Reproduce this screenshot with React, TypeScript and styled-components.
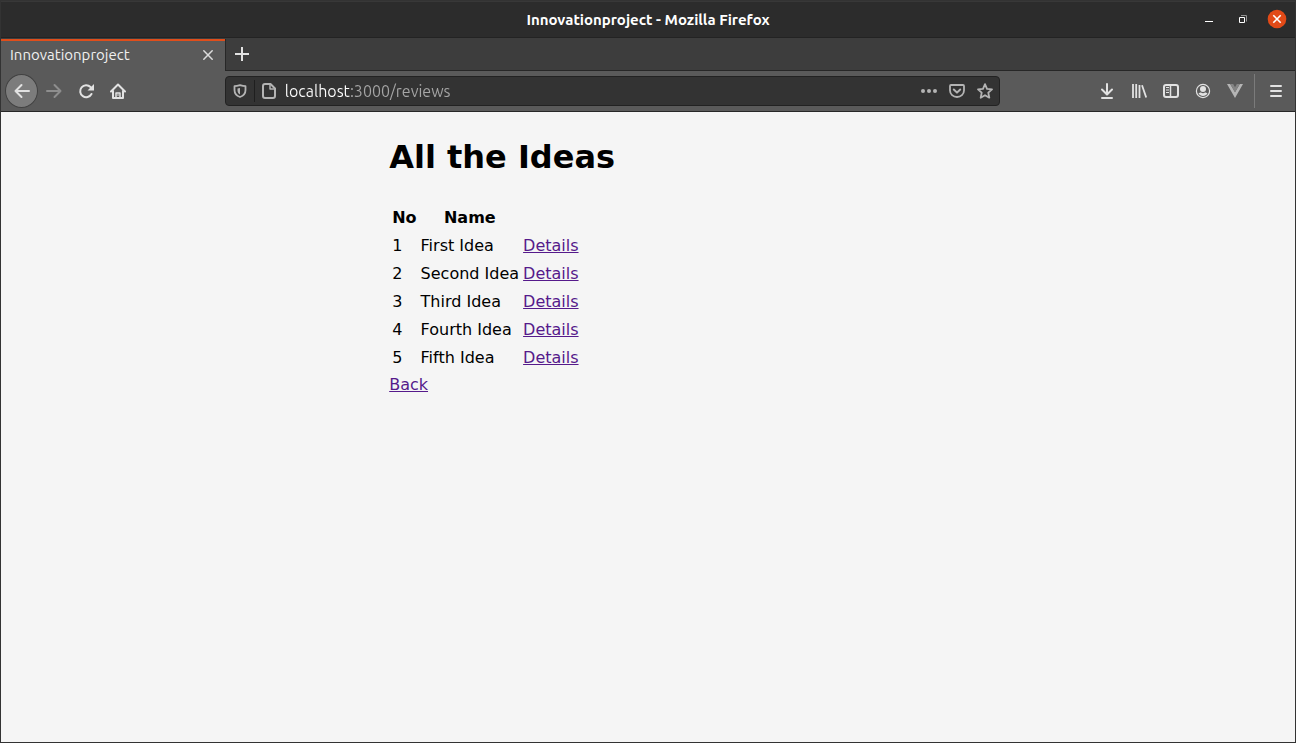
import React from "react";
import styled, { createGlobalStyle } from "styled-components";

const GlobalStyle = createGlobalStyle`
  *, *::before, *::after { box-sizing: border-box; }
  body { margin: 0; background: #f5f5f5; }
  button { padding: 0; border: 0; background: none; color: inherit; font: inherit; }
`;

const chromeFont = `"Ubuntu", "Noto Sans", "Open Sans", sans-serif`;

const Window = styled.div`
  display: flex;
  flex-direction: column;
  min-height: 100vh;
  border: 1px solid #333333;
  background: #f5f5f5;
`;

const TitleBar = styled.header`
  display: grid;
  grid-template-columns: 1fr auto 1fr;
  align-items: center;
  height: 37px;
  border-top: 1px solid #383838;
  border-bottom: 1px solid #232323;
  background: #2c2c2c;
  color: #ffffff;
  font: 700 15px/20px ${chromeFont};
`;

const WindowTitle = styled.span`
  grid-column: 2;
`;

const WindowButtons = styled.div`
  display: flex;
  justify-content: flex-end;
  align-items: center;
  padding: 0 1px 2px 0;
`;

const WindowButton = styled.button`
  display: grid;
  place-items: center;
  width: 34px;
  height: 32px;
`;

const TabStrip = styled.div`
  display: flex;
  height: 33px;
  padding-top: 1px;
  background: #3d3d3d;
  color: #f0f0f0;
`;

const Tab = styled.div`
  display: flex;
  align-items: center;
  justify-content: space-between;
  width: 224px;
  padding: 0 9px 2px;
  border-top: 2px solid #e04e1b;
  background: #5a5a5a;
  font: 400 15px/20px ${chromeFont};
`;

const TabClose = styled.button`
  display: grid;
  place-items: center;
  width: 16px;
  height: 16px;
`;

const TabRest = styled.div`
  display: flex;
  flex: 1;
  align-items: center;
  padding-bottom: 2px;
  border-left: 1px solid #272727;
  border-bottom: 1px solid #272727;
`;

const ToolBar = styled.nav`
  display: flex;
  align-items: center;
  height: 41px;
  padding: 0 3px 0 4px;
  border-bottom: 1px solid #272727;
  background: #5a5a5a;
  color: #e2e2e2;
`;

const ToolButton = styled.button<{ $dim?: boolean }>`
  display: grid;
  place-items: center;
  flex: none;
  width: 32px;
  height: 32px;
  color: ${(p) => (p.$dim ? "#8e8e8e" : "inherit")};
`;

const BackButton = styled(ToolButton)`
  width: 33px;
  height: 34px;
  border: 1px solid #414141;
  border-radius: 50%;
  background: #7c7c7c;
`;

const Spacer = styled.div`
  flex: 91 1 0;
`;

const AddressBar = styled.div`
  display: flex;
  flex: 775 1 0;
  align-items: center;
  height: 30px;
  border: 1px solid #222222;
  border-radius: 4px;
  background: #333333;
  color: #b4b4b4;
`;

const AddressButton = styled.button`
  display: grid;
  place-items: center;
  flex: none;
  width: 28px;
  height: 28px;
`;

const AddressDivider = styled.span`
  width: 1px;
  height: 22px;
  background: #1f1f1f;
`;

/* The host part is bright and the path part is muted. */
const AddressInput = styled.input`
  flex: 1;
  min-width: 0;
  height: 28px;
  margin-left: 2px;
  padding: 0;
  border: 0;
  outline: 0;
  background: linear-gradient(90deg, #ffffff 65px, #a6a6a6 65px);
  background-clip: text;
  -webkit-background-clip: text;
  color: transparent;
  font: 400 16px/20px ${chromeFont};
`;

const AddressActions = styled.div`
  display: flex;
`;

const ToolDivider = styled.span`
  width: 1px;
  height: 34px;
  margin: 0 5px 0 3px;
  background: #7b7b7b;
`;

const Page = styled.main`
  flex: 1;
  padding: 0 30%;
  color: #000000;
  font: 400 16px/24px "DejaVu Sans", sans-serif;
`;

const Heading = styled.h1`
  margin: 21px 0 22px;
  font-size: 32px;
  line-height: 48px;
`;

const IdeasTable = styled.table`
  border-spacing: 2px;
  th, td { padding: 1px; white-space: nowrap; }
`;

const PageLink = styled.a`
  color: #551a8b;
`;

const Icon = ({ children, size = 16, ...rest }: React.SVGProps<SVGSVGElement> & { size?: number }) => (
  <svg
    width={size}
    height={size}
    viewBox={`0 0 ${size} ${size}`}
    fill="none"
    stroke="currentColor"
    strokeWidth="2"
    strokeLinecap="round"
    strokeLinejoin="round"
    aria-hidden="true"
    {...rest}
  >
    {children}
  </svg>
);

const ideas = ["First Idea", "Second Idea", "Third Idea", "Fourth Idea", "Fifth Idea"];

export default function App() {
  return (
    <Window>
      <GlobalStyle />
      <TitleBar>
        <WindowTitle>Innovationproject - Mozilla Firefox</WindowTitle>
        <WindowButtons>
          <WindowButton aria-label="Minimize">
            <Icon stroke="none" fill="#fff"><path d="M4 10h8v1H4z" /></Icon>
          </WindowButton>
          <WindowButton aria-label="Restore">
            <Icon strokeWidth="1" strokeLinecap="butt" strokeLinejoin="miter">
              <path d="M4.500 6.500h5v5h-5z" />
              <path d="M6 4.500h5.500v6" stroke="#929292" />
            </Icon>
          </WindowButton>
          <WindowButton aria-label="Close window">
            <Icon size={20} strokeWidth="1.600" strokeLinecap="butt">
              <circle cx="10" cy="10" r="9.300" fill="#e24a17" stroke="none" />
              <path d="M6.300 6.300l7.400 7.400M13.700 6.300l-7.400 7.400" />
            </Icon>
          </WindowButton>
        </WindowButtons>
      </TitleBar>

      <TabStrip>
        <Tab>
          <span>Innovationproject</span>
          <TabClose aria-label="Close tab">
            <Icon strokeWidth="1.500" stroke="#dcdcdc"><path d="M3.800 3.800l8.400 8.400M12.200 3.800l-8.400 8.400" /></Icon>
          </TabClose>
        </Tab>
        <TabRest>
          <ToolButton aria-label="New tab">
            <Icon strokeLinecap="butt" stroke="#e2e2e2"><path d="M8 1v14M1 8h14" /></Icon>
          </ToolButton>
        </TabRest>
      </TabStrip>

      <ToolBar>
        <BackButton aria-label="Back">
          <Icon><path d="M15 8H1.500M7.500 2L1.500 8l6 6" /></Icon>
        </BackButton>
        <ToolButton $dim aria-label="Forward">
          <Icon><path d="M1 8h13.500M8.500 2l6 6-6 6" /></Icon>
        </ToolButton>
        <ToolButton aria-label="Reload">
          <Icon>
            <path d="M13.500 11A6 6 0 1 1 12.500 4" />
            <path d="M16 1v6.500H9.500z" fill="currentColor" stroke="none" />
          </Icon>
        </ToolButton>
        <ToolButton aria-label="Home">
          <Icon>
            <path d="M1 8.500L8 1.500l7 7M3 8v7h10V8" />
            <path d="M6 15v-5h4v5" strokeWidth="1.500" />
            <path d="M8 11.500v1" strokeWidth="1" />
          </Icon>
        </ToolButton>
        <Spacer />
        <AddressBar>
          <AddressButton aria-label="Tracking protection">
            <Icon size={14}>
              <path d="M7 1.200C5 1.800 3.500 2.200 1.500 2.200V6c0 3.500 2 5.800 5.500 7 3.500-1.200 5.500-3.500 5.500-7V2.200C10.500 2.200 9 1.800 7 1.200z" strokeWidth="1.800" />
              <path d="M7 4v6.500C5.200 9.500 4.500 8 4.500 6V4.500z" fill="currentColor" stroke="none" />
            </Icon>
          </AddressButton>
          <AddressDivider />
          <AddressButton aria-label="Site information">
            <Icon>
              <path d="M4 1h5.500L14 5.500V13a2 2 0 0 1-2 2H4a2 2 0 0 1-2-2V3a2 2 0 0 1 2-2z" />
              <path d="M9 1.500V6h4.500" strokeWidth="1.500" />
            </Icon>
          </AddressButton>
          <AddressInput aria-label="Address" defaultValue="localhost:3000/reviews" spellCheck={false} />
          <AddressActions>
            <AddressButton aria-label="Page actions">
              <Icon stroke="none" fill="currentColor">
                <circle cx="2" cy="8" r="2" /><circle cx="8" cy="8" r="2" /><circle cx="14" cy="8" r="2" />
              </Icon>
            </AddressButton>
            <AddressButton aria-label="Save to Pocket">
              <Icon>
                <path d="M2 2h12a1 1 0 0 1 1 1v4.500a7 6.500 0 0 1-14 0V3a1 1 0 0 1 1-1z" strokeWidth="1.800" />
                <path d="M4.800 6.500L8 9.600l3.200-3.100" />
              </Icon>
            </AddressButton>
            <AddressButton aria-label="Bookmark this page">
              <Icon strokeWidth="1.800">
                <path d="M8 1.200l2 4.600 5 .5-3.700 3.400 1 5L8 12.200l-4.300 2.500 1-5L1 6.300l5-.5z" />
              </Icon>
            </AddressButton>
          </AddressActions>
        </AddressBar>
        <Spacer />
        <ToolButton aria-label="Downloads">
          <Icon><path d="M8 1v10M3 6.500l5 5 5-5M3 15h10" /></Icon>
        </ToolButton>
        <ToolButton aria-label="Library">
          <Icon strokeLinecap="butt"><path d="M2 1v14M5.200 1v14M8.500 2v13M11 2.200L15.200 14.500" strokeWidth="1.800" /></Icon>
        </ToolButton>
        <ToolButton aria-label="Sidebars">
          <Icon>
            <rect x="1" y="2" width="14" height="12" rx="2" />
            <path d="M7.500 2v12" strokeWidth="1.500" />
            <path d="M3 4.500h3M3 7h3M3 9.500h3" strokeWidth="1" strokeLinecap="butt" />
          </Icon>
        </ToolButton>
        <ToolButton aria-label="Account">
          <Icon>
            <circle cx="8" cy="8" r="6.600" strokeWidth="1.200" />
            <circle cx="8" cy="6" r="3" fill="currentColor" stroke="none" />
            <path d="M3.500 10.300c1.500-1 2-.8 2.500-.8 1.200 1 2.800 1 4 0 .5 0 1-.2 2.500.8C11.500 12.200 10 13 8 13s-3.500-.8-4.500-2.700z" fill="currentColor" stroke="none" />
          </Icon>
        </ToolButton>
        <ToolButton aria-label="Vue.js devtools">
          <Icon stroke="none">
            <path d="M0 1h3.200L8 9.300 12.800 1H16L8 15z" fill="#b5b5b5" />
            <path d="M3.200 1h3L8 4.200 9.800 1h3L8 9.300z" fill="#858585" />
          </Icon>
        </ToolButton>
        <ToolDivider />
        <ToolButton aria-label="Open menu">
          <Icon><path d="M3 3h10M3 8h10M3 13h10" /></Icon>
        </ToolButton>
      </ToolBar>

      <Page>
        <Heading>All the Ideas</Heading>
        <IdeasTable>
          <thead>
            <tr>
              <th scope="col">No</th>
              <th scope="col">Name</th>
              <td />
            </tr>
          </thead>
          <tbody>
            {ideas.map((name, i) => (
              <tr key={name}>
                <td>{i + 1}</td>
                <td>{name}</td>
                <td><PageLink href="#details">Details</PageLink></td>
              </tr>
            ))}
          </tbody>
        </IdeasTable>
        <PageLink href="#back">Back</PageLink>
      </Page>
    </Window>
  );
}
